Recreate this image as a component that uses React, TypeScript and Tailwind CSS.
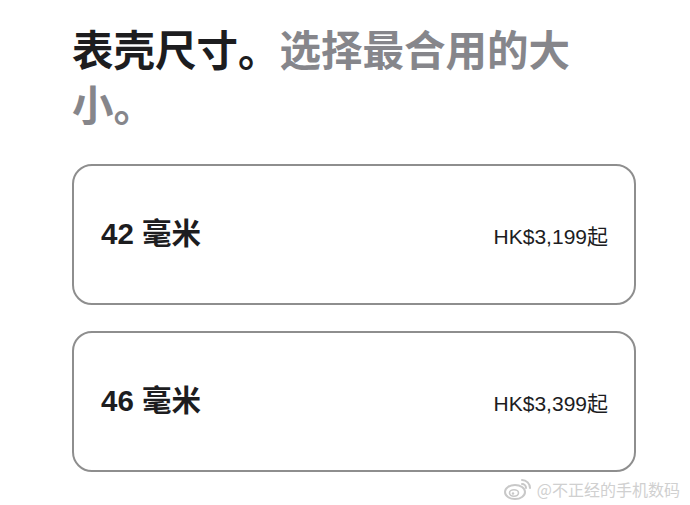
const sizes = [
  { label: "42 毫米", price: "HK$3,199起" },
  { label: "46 毫米", price: "HK$3,399起" },
];

const WeiboMark = () => (
  <svg width="30" height="24" viewBox="0 0 30 24" fill="none">
    <ellipse cx="12" cy="15" rx="10" ry="7" stroke="#c8c8c8" strokeWidth="2" fill="white" />
    <ellipse cx="11" cy="16" rx="4.5" ry="3.2" stroke="#c8c8c8" strokeWidth="1.6" />
    <circle cx="10" cy="16.5" r="1.2" fill="#c8c8c8" />
    <path d="M19 3 a8 8 0 0 1 8 8" stroke="#c8c8c8" strokeWidth="2" strokeLinecap="round" />
    <path d="M19 7 a4 4 0 0 1 4 4" stroke="#c8c8c8" strokeWidth="2" strokeLinecap="round" />
  </svg>
);

export default function App() {
  return (
    <div
      className="relative w-[690px] h-[505px] overflow-hidden bg-white pl-[72px] pr-[54px] pt-[24px]"
      style={{ fontFamily: '"Liberation Sans", "Noto Sans CJK SC", sans-serif' }}
    >
      <h1 className="max-w-[520px] text-[41.5px] leading-[55px] font-semibold">
        <span className="text-[#1d1d1f]">表壳尺寸。</span>
        <span className="text-[#86868b]">选择最合用的大小。</span>
      </h1>

      <div className="mt-[30px] flex flex-col gap-[26px]">
        {sizes.map((s) => (
          <div
            key={s.label}
            className="h-[141px] rounded-[20px] border-2 border-[#8e8e8e] flex items-center pl-[27px] pr-[26px]"
          >
            <div className="flex w-full items-baseline justify-between">
              <span className="text-[29.5px] font-semibold text-[#1d1d1f]">{s.label}</span>
              <span className="text-[21px] text-[#1d1d1f]">{s.price}</span>
            </div>
          </div>
        ))}
      </div>

      {/* watermark */}
      <div className="absolute right-[10px] bottom-[4px] flex items-center gap-[4px]">
        <WeiboMark />
        <span
          className="text-[16px] text-[#d0d0d0]"
          style={{ fontFamily: '"Noto Sans CJK SC", sans-serif' }}
        >
          @不正经的手机数码
        </span>
      </div>
    </div>
  );
}
